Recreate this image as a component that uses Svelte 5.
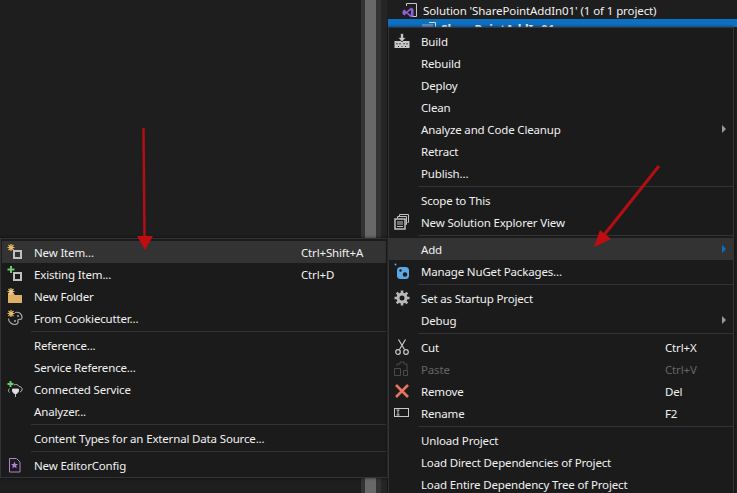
<script>
  // type: row | sep; icon names map to the svg snippets below
  const leftMenu = [
    { label: "New Item...", key: "Ctrl+Shift+A", icon: "newItem", hover: true },
    { label: "Existing Item...", key: "Ctrl+D", icon: "existing" },
    { label: "New Folder", icon: "folder" },
    { label: "From Cookiecutter...", icon: "cookie" },
    { sep: true },
    { label: "Reference..." },
    { label: "Service Reference..." },
    { label: "Connected Service", icon: "connected" },
    { label: "Analyzer..." },
    { sep: true },
    { label: "Content Types for an External Data Source..." },
    { sep: true },
    { label: "New EditorConfig", icon: "editorconfig" },
  ];

  const rightMenu = [
    { label: "Build", icon: "build" },
    { label: "Rebuild" },
    { label: "Deploy" },
    { label: "Clean" },
    { label: "Analyze and Code Cleanup", arrow: "grey" },
    { label: "Retract" },
    { label: "Publish..." },
    { sep: true },
    { label: "Scope to This" },
    { label: "New Solution Explorer View", icon: "newView" },
    { sep: true },
    { label: "Add", arrow: "blue", hover: true },
    { label: "Manage NuGet Packages...", icon: "nuget" },
    { sep: true },
    { label: "Set as Startup Project", icon: "gear" },
    { label: "Debug", arrow: "grey" },
    { sep: true },
    { label: "Cut", key: "Ctrl+X", icon: "cut" },
    { label: "Paste", key: "Ctrl+V", icon: "paste", disabled: true },
    { label: "Remove", key: "Del", icon: "remove" },
    { label: "Rename", key: "F2", icon: "rename" },
    { sep: true },
    { label: "Unload Project" },
    { label: "Load Direct Dependencies of Project" },
    { label: "Load Entire Dependency Tree of Project" },
  ];
</script>

{#snippet icon(name)}
  <svg class="icon" width="16" height="16" viewBox="0 0 16 16">
    {#if name === "newItem" || name === "existing"}
      <rect x="7" y="7" width="7" height="7" fill="none" stroke="#c0c0c0" stroke-width="2" />
      {#if name === "newItem"}
        <path d="M4 0v7M0.500 3.500h7M1.500 1l5 5M6.500 1l-5 5" stroke="#e8b96a" stroke-width="1.200" />
      {:else}
        <path d="M4 0v7M0.500 3.500h7" stroke="#6fc96f" stroke-width="2" />
      {/if}
    {:else if name === "folder"}
      <path d="M1 5h5l2 2h7v8H1z" fill="#dcb067" />
      <path d="M4 0v7M0.500 3.500h7M1.500 1l5 5M6.500 1l-5 5" stroke="#f0c880" stroke-width="1.200" />
    {:else if name === "cookie"}
      <path d="M8 2.500c4-1 7 1.500 7 5 0 1.500-1 2-2 1.800-1.500-.3-2.500.5-2 2 .5 1.500-.5 3.200-3 3.200-3.500 0-6.500-2.500-6.500-6" fill="none" stroke="#a8a8a8" stroke-width="1.200" />
      <circle cx="8" cy="11" r="1" fill="#a8a8a8" />
      <circle cx="11" cy="6" r="1" fill="#a8a8a8" />
      <path d="M4 0v7M0.500 3.500h7M1.500 1l5 5M6.500 1l-5 5" stroke="#e8b96a" stroke-width="1.200" />
    {:else if name === "connected"}
      <path d="M2.500 11.500a2.500 2.500 0 0 1 0-4M7 4c2-1 4-.5 5 1.500 2 0 3.500 1.500 3 3.500-.3 1-1 1.700-2 2" fill="none" stroke="#b4b4b4" />
      <path d="M5.500 8h6v2.500L10 12.500H7l-1.500-2zM8.500 12v4" fill="#e0e0e0" stroke="#e0e0e0" stroke-width=".8" />
      <path d="M3.500 0v6M0.500 3h6" stroke="#6fc96f" stroke-width="2" />
    {:else if name === "editorconfig"}
      <path d="M2.500 1.500h7l3.500 3.500v10H2.500z" fill="none" stroke="#b180d7" />
      <path d="M7.500 4.500l1 2.400 2.500.2-1.900 1.700.6 2.500-2.200-1.400-2.200 1.400.6-2.500-1.900-1.700 2.500-.2z" fill="#b180d7" />
    {:else if name === "build"}
      <path d="M0.500 8h15v7h-15z" fill="#c8c8c8" />
      <path d="M6.500 0.500h3v4h2.500L8 9 4 4.500h2.500z" fill="#c8c8c8" stroke="#1b1b1c" stroke-width=".7" />
      <path d="M3 10v1.500M6 10v1.500M10 10v1.500M13 10v1.500M4.500 13v1M8 13v1M11.500 13v1" stroke="#1b1b1c" stroke-width="1" />
    {:else if name === "newView"}
      <path d="M5.500 2.500V.5h9v8h-1" fill="none" stroke="#c0c0c0" />
      <path d="M3.500 4.500v-2h9v8h-1" fill="none" stroke="#c0c0c0" />
      <rect x="1" y="5" width="10" height="10" fill="none" stroke="#c0c0c0" stroke-width="1.500" />
      <path d="M3 8h6M3 10h6M3 12.500h6" stroke="#c0c0c0" />
    {:else if name === "nuget"}
      <rect x="3" y="4" width="12" height="12" rx="3.500" fill="#5aa9e6" />
      <circle cx="11" cy="11.500" r="2.200" fill="#1b1b1c" />
      <circle cx="6.500" cy="7.500" r="1.200" fill="#1b1b1c" />
      <circle cx="1.500" cy="1.500" r="1" fill="#5aa9e6" />
    {:else if name === "gear"}
      <circle cx="8" cy="8" r="4" fill="none" stroke="#b8b8b8" stroke-width="3" />
      <path d="M8 .5v15M.5 8h15M2.700 2.700l10.600 10.600M13.300 2.700L2.700 13.300" stroke="#b8b8b8" stroke-width="2.500" stroke-dasharray="3 9" />
    {:else if name === "cut"}
      <path d="M4.500 0.500l6 10M11.500 0.500l-6 10" stroke="#c8c8c8" stroke-width="1.200" fill="none" />
      <circle cx="4" cy="13" r="2.300" fill="none" stroke="#c8c8c8" stroke-width="1.200" />
      <circle cx="12" cy="13" r="2.300" fill="none" stroke="#c8c8c8" stroke-width="1.200" />
    {:else if name === "paste"}
      <path d="M3 5V3h3V1h4v2h3v6M.5 7.500h6v7h-6zM9.500 9.500h4v5h-4z" fill="none" stroke="#4a4a4a" />
    {:else if name === "remove"}
      <path d="M2 2l12 12M14 2L2 14" stroke="#e8735f" stroke-width="2.600" />
    {:else if name === "rename"}
      <rect x=".5" y="3.500" width="14" height="8" fill="none" stroke="#c8c8c8" />
      <path d="M2.500 5h3M2.500 10h3M4 5v5" stroke="#c8c8c8" fill="none" />
    {/if}
  </svg>
{/snippet}

{#snippet menu(items, cls)}
  <div class="menu {cls}">
    {#each items as item}
      {#if item.sep}
        <div class="sep"></div>
      {:else}
        <div class="row" class:hover={item.hover} class:disabled={item.disabled}>
          <span class="gutter">
            {#if item.icon}{@render icon(item.icon)}{/if}
          </span>
          <span class="label">{item.label}</span>
          <span class="key">{item.key ?? ""}</span>
          <span class="more">
            {#if item.arrow}<i class="tri {item.arrow}"></i>{/if}
          </span>
        </div>
      {/if}
    {/each}
  </div>
{/snippet}

<div class="page">
  <div class="editor"></div>
  <div class="scrollbar"><div class="thumb"></div></div>
  <div class="sash"></div>
  <div class="explorer">
    <div class="tree-row">
      <svg class="sln" width="16" height="16" viewBox="0 0 16 16">
        <path d="M4.500 4V1.500h10v13H10" fill="none" stroke="#c8c8c8" />
        <path d="M0.500 9l2-1.500 2 2L9 5.500l2.500 1.500v7L9 15.500l-4.500-4-2 2-2-1.500z" fill="#8f5fd7" />
        <path d="M5.500 10.500L9 8v5z" fill="#1e1e1e" />
      </svg>
      <span>Solution 'SharePointAddIn01' (1 of 1 project)</span>
    </div>
    <div class="tree-row selected">
      <svg class="proj" width="16" height="16" viewBox="0 0 16 16">
        <path d="M8 1.500h6.500v13" fill="none" stroke="#d8d8d8" />
        <rect x="1" y="3" width="11" height="12" fill="#5b8fc7" />
      </svg>
      <span class="bold">SharePointAddIn01</span>
    </div>
  </div>

  {@render menu(leftMenu, "left")}
  {@render menu(rightMenu, "right")}

  <svg class="arrows" width="737" height="493" viewBox="0 0 737 493">
    <path d="M143.500 128L144.500 238" stroke="#b40d12" stroke-width="2.500" />
    <path d="M137 236h16l-8 14z" fill="#c00d12" />
    <path d="M659 166L604 235" stroke="#b40d12" stroke-width="3" />
    <path d="M594 247l6-17 11 9z" fill="#c00d12" />
  </svg>
</div>

<style>
  :global(body) {
    margin: 0;
    background: #1e1e1e;
  }

  .page {
    width: 737px;
    height: 493px;
    position: relative;
    overflow: hidden;
    display: flex;
    background: #1e1e1e;
    font-family: "Noto Sans", "Liberation Sans", sans-serif;
    font-size: 11.5px;
    letter-spacing: -0.16px;
    color: #f1f1f1;
  }

  .editor {
    width: 361px;
    background: #1e1e1e;
  }

  .scrollbar {
    width: 20px;
    background: #333336;
  }

  .thumb {
    width: 11px;
    height: 100%;
    margin-left: 4px;
    background: #686868;
  }

  .sash {
    width: 6px;
    background: #252526;
  }

  .explorer {
    flex: 1;
    background: #1e1e1e;
  }

  .tree-row {
    height: 18px;
    display: flex;
    align-items: center;
    padding-top: 1px;
  }

  .tree-row span {
    white-space: nowrap;
    letter-spacing: -0.1px;
  }

  .tree-row.selected {
    background: #0e70c0;
    height: 8px;
    margin-left: 1px;
    padding: 0;
    align-items: flex-start;
    overflow: hidden;
  }

  .sln {
    margin: 0 5px 0 15px;
  }

  .proj {
    margin: 2px 4px 0 33px;
  }

  .bold {
    font-weight: 700;
    font-size: 12px;
    margin-top: 2px;
  }

  .menu {
    position: absolute;
    box-sizing: border-box;
    background: #1b1b1c;
    border: 1px solid #333337;
    box-shadow: 0 0 3px rgba(0, 0, 0, 0.6);
    padding-top: 2px;
  }

  .menu.left {
    left: 0;
    top: 238px;
    width: 388px;
    height: 240px;
    padding-left: 1px;
    padding-right: 1px;
  }

  .menu.right {
    left: 388px;
    top: 27px;
    width: 346px;
    height: 480px;
  }

  .row {
    height: 22px;
    display: flex;
    align-items: center;
    white-space: nowrap;
  }

  .row.hover {
    background: #333334;
  }

  .row.disabled {
    color: #656565;
  }

  .gutter {
    width: 29px;
    display: flex;
    justify-content: center;
    flex: none;
    padding-right: 4px;
    box-sizing: border-box;
  }

  .label {
    flex: 1;
    margin-left: 3px;
  }

  .key {
    width: 69px;
    flex: none;
  }

  .right .key {
    width: 52px;
  }

  .more {
    width: 16px;
    flex: none;
  }

  .tri {
    display: block;
    width: 0;
    height: 0;
    margin-left: 5px;
    border-left: 4px solid #999;
    border-top: 4px solid transparent;
    border-bottom: 4px solid transparent;
  }

  .tri.blue {
    border-left-color: #0e70c0;
  }

  .sep {
    height: 1px;
    margin: 2px 0 2px 29px;
    background: #333337;
  }

  .arrows {
    position: absolute;
    left: 0;
    top: 0;
    pointer-events: none;
  }
</style>
